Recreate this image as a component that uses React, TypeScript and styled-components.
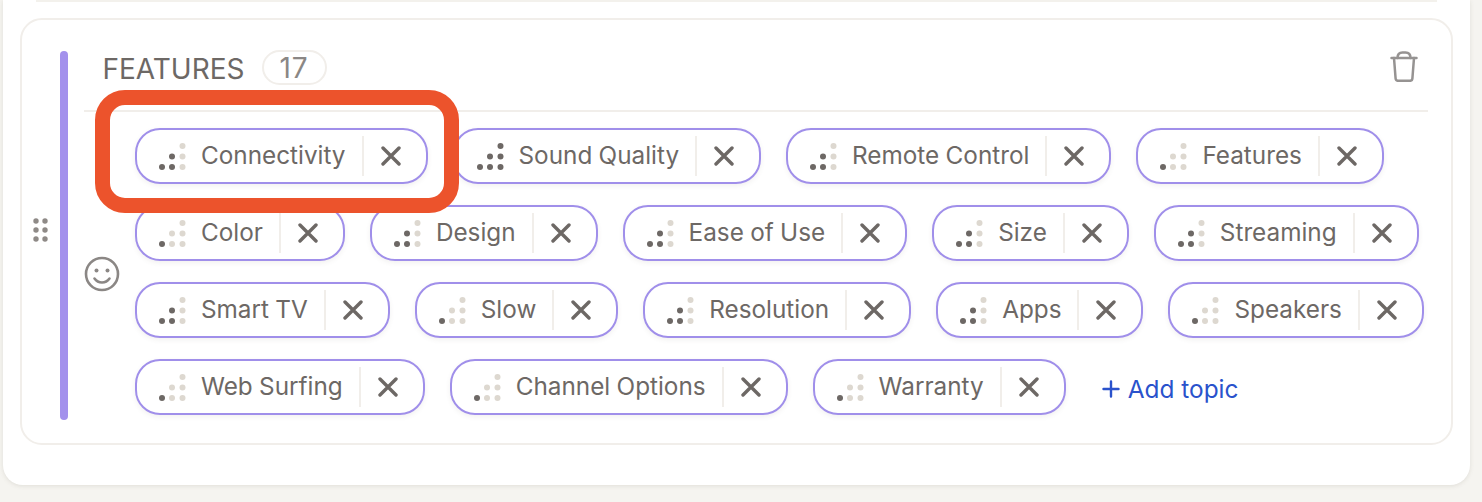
import React from "react";
import styled, { createGlobalStyle } from "styled-components";

const Global = createGlobalStyle`
  html, body { margin: 0; padding: 0; background: #f5f4f0; }
  body { font-family: "Inter", "Liberation Sans", sans-serif; overflow: hidden; }
  * { box-sizing: border-box; }
`;

const Page = styled.div`
  width: 1482px;
  height: 502px;
  padding-left: 3px;
  overflow: hidden;
`;
const Panel = styled.main`
  width: 1467px;
  height: 485px;
  background: #fff;
  border-radius: 0 0 20px 20px;
  box-shadow: 0 1px 4px rgba(120, 110, 95, 0.16);
  padding: 0 17px;
`;
const PrevEdge = styled.div`
  height: 2px;
  margin: 0 16px;
  background: #f3f1ec;
`;
const Card = styled.section`
  margin-top: 16px;
  height: 427px;
  border: 2px solid #f1eeea;
  border-radius: 22px;
  padding: 31px 23px 23px 11px;
  display: flex;
  align-items: stretch;
`;
const Handle = styled.div`
  width: 15px;
  margin-right: 12px;
  display: flex;
  align-items: center;
  padding-bottom: 11px;
  color: #8f8a87;
`;
const Bar = styled.div`
  width: 8px;
  border-radius: 4px;
  background: #a391ec;
  margin-right: 16px;
`;
const Section = styled.div`
  flex: 1;
  min-width: 0;
  display: flex;
  flex-direction: column;
`;
const Header = styled.header`
  flex: none;
  height: 62px;
  margin-top: -1px;
  padding: 0 10px 0 18.5px;
  border-bottom: 2px solid #f1eeea;
  display: flex;
  align-items: flex-start;
`;
const Title = styled.h2`
  margin: 2px 17px 0 0;
  font-size: 28px;
  font-weight: 400;
  line-height: 35px;
  color: #6d6865;
`;
const Count = styled.span`
  width: 65px;
  height: 35px;
  border: 2px solid #f1eeea;
  border-radius: 18px;
  font-size: 28px;
  letter-spacing: 1px;
  line-height: 33px;
  text-align: center;
  color: #8b8785;
`;
const Trash = styled.svg`
  margin-left: auto;
  margin-top: 1px;
  color: #969392;
`;
const Body = styled.div`
  flex: 1;
  padding-top: 15px;
  display: flex;
  align-items: center;
`;
const Smile = styled.svg`
  flex: none;
  margin-right: 15px;
  color: #8b8785;
`;
const Chips = styled.div`
  flex: 1;
  min-width: 0;
  padding-bottom: 4px;
  display: flex;
  flex-wrap: wrap;
  align-items: center;
  gap: 21px 25px;
`;
const Chip = styled.div`
  position: relative;
  height: 56px;
  padding-left: 21px;
  border: 2px solid #a08fea;
  border-radius: 25px;
  background: #fff;
  box-shadow: 0 2px 5px rgba(90, 80, 70, 0.08);
  display: flex;
  align-items: center;
  font-size: 24.3px;
  word-spacing: -0.5px;
  color: #6d6865;
`;
const Label = styled.span`
  margin: 0 16px 2px 14px;
  white-space: nowrap;
`;
const Rule = styled.span`
  width: 2px;
  height: 40px;
  background: #f1eeea;
`;
const Close = styled.span`
  padding: 0 25px 0 17px;
  display: flex;
`;
const Highlight = styled.div`
  position: absolute;
  top: -40px;
  left: -42px;
  right: -33px;
  bottom: -31px;
  border: 15px solid #ec532c;
  border-radius: 30px;
  z-index: 5;
  pointer-events: none;
`;
const AddTopic = styled.div`
  margin: 3px 0 0 11px;
  display: flex;
  align-items: center;
  gap: 8px;
  font-size: 24.4px;
  color: #2a52cc;
  white-space: nowrap;
`;

const positions: [number, number][] = [
  [4, 25],
  [14, 25],
  [14, 14.5],
  [24.5, 25],
  [24.5, 14.5],
  [24.5, 4],
];

const Dots = ({ level }: { level: number }) => (
  <svg width="29" height="29" viewBox="0 0 29 29" fill="none" style={{ flex: "none" }}>
    {positions.map(([cx, cy], i) => (
      <circle key={i} cx={cx} cy={cy} r="3" fill={i < level ? "#6d6865" : "#ddd8d0"} />
    ))}
  </svg>
);

const topics: { name: string; level: number }[] = [
  { name: "Connectivity", level: 3 },
  { name: "Sound Quality", level: 6 },
  { name: "Remote Control", level: 3 },
  { name: "Features", level: 1 },
  { name: "Color", level: 1 },
  { name: "Design", level: 3 },
  { name: "Ease of Use", level: 3 },
  { name: "Size", level: 3 },
  { name: "Streaming", level: 3 },
  { name: "Smart TV", level: 3 },
  { name: "Slow", level: 1 },
  { name: "Resolution", level: 3 },
  { name: "Apps", level: 3 },
  { name: "Speakers", level: 1 },
  { name: "Web Surfing", level: 1 },
  { name: "Channel Options", level: 1 },
  { name: "Warranty", level: 1 },
];

export default function App() {
  return (
    <Page>
      <Global />
      <Panel>
        <PrevEdge />
        <Card>
          <Handle>
            <svg width="15" height="24" viewBox="0 0 15 24" fill="currentColor">
              <circle cx="3" cy="3" r="2.7" />
              <circle cx="12" cy="3" r="2.7" />
              <circle cx="3" cy="12" r="2.7" />
              <circle cx="12" cy="12" r="2.7" />
              <circle cx="3" cy="21" r="2.7" />
              <circle cx="12" cy="21" r="2.7" />
            </svg>
          </Handle>
          <Bar />
          <Section>
            <Header>
              <Title>FEATURES</Title>
              <Count>17</Count>
              <Trash width="28" height="31" viewBox="0 0 28 31" fill="none" stroke="currentColor" strokeWidth="2.5" strokeLinecap="round" strokeLinejoin="round">
                <path d="M1.5 7h25" />
                <path d="M7.5 7c0-3.5 2-5.5 5-5.5h3c3 0 5 2 5 5.5" />
                <path d="M4 7l1.6 20.5c.1 1.4 1 2.3 2.4 2.3h12c1.400 0 2.300-.9 2.400-2.300L24 7" />
              </Trash>
            </Header>
            <Body>
              <Smile width="36" height="36" viewBox="0 0 36 36" fill="none" stroke="currentColor" strokeWidth="2.6" strokeLinecap="round">
                <circle cx="18" cy="18" r="16" />
                <circle cx="12.500" cy="14.500" r="2" fill="currentColor" stroke="none" />
                <circle cx="23.500" cy="14.500" r="2" fill="currentColor" stroke="none" />
                <path d="M10.500 22.500c2 2.800 4.500 4 7.500 4s5.500-1.200 7.500-4" />
              </Smile>
              <Chips>
                {topics.map((t, i) => (
                  <Chip key={t.name}>
                    <Dots level={t.level} />
                    <Label>{t.name}</Label>
                    <Rule />
                    <Close>
                      <svg width="20" height="20" viewBox="0 0 20 20" stroke="#6d6865" strokeWidth="3.4" strokeLinecap="round">
                        <path d="M2 2l16 16M18 2L2 18" />
                      </svg>
                    </Close>
                    {i === 0 && <Highlight />}
                  </Chip>
                ))}
                <AddTopic>
                  <svg width="18" height="18" viewBox="0 0 18 18" stroke="#2a52cc" strokeWidth="2.4" strokeLinecap="round">
                    <path d="M9 1.500v15M1.500 9h15" />
                  </svg>
                  Add topic
                </AddTopic>
              </Chips>
            </Body>
          </Section>
        </Card>
      </Panel>
    </Page>
  );
}
